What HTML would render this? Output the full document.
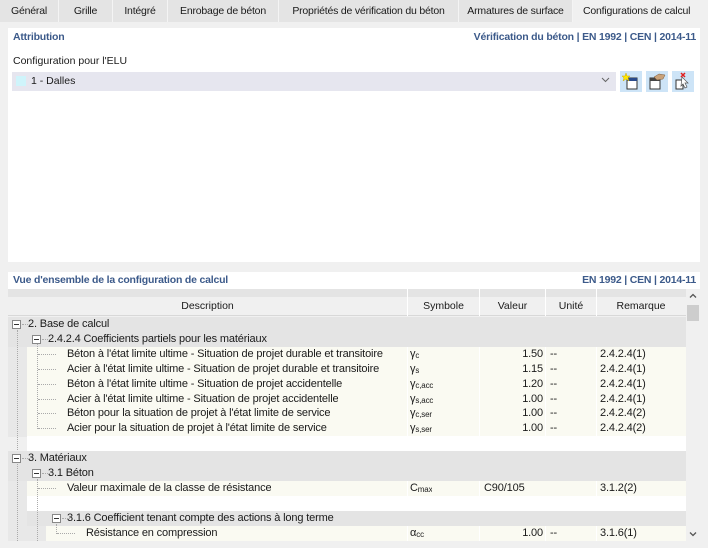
<!DOCTYPE html>
<html><head><meta charset="utf-8"><style>
*{margin:0;padding:0;box-sizing:border-box}
body{width:708px;height:548px;background:#f0f0f0;font-family:"Liberation Sans",sans-serif;font-size:11px;color:#1a1a1a;position:relative;overflow:hidden}
.a{position:absolute;white-space:nowrap}
.tab{position:absolute;top:0;height:22px;line-height:22px;text-align:center;background:#e4e4e4;border-right:1px solid #f4f4f4;font-size:10.5px;letter-spacing:-0.2px;white-space:nowrap}
.blue{color:#3c5a8a;font-weight:bold;font-size:10.5px;letter-spacing:-0.2px}
.row{position:absolute;left:8px;width:678px;height:15px;line-height:15px}
.c{position:absolute;top:0;height:15px;white-space:nowrap;overflow:hidden;font-size:11px;letter-spacing:-0.15px}
.exp{position:absolute;width:9px;height:9px;border:1px solid #888;background:#fff;top:3px}
.exp:after{content:"";position:absolute;left:1px;top:3px;width:5px;height:1px;background:#333}
.vl{position:absolute;border-left:1px dotted #aaa}
.hl{position:absolute;border-top:1px dotted #aaa;width:8px}
.btn{position:absolute;top:71px;width:22px;height:21px;background:#cde4f7}
sub{font-size:8px;vertical-align:-1px}
</style></head><body>
<div class="tab" style="left:0;width:59px">Général</div>
<div class="tab" style="left:59px;width:54px">Grille</div>
<div class="tab" style="left:113px;width:55px">Intégré</div>
<div class="tab" style="left:168px;width:111px">Enrobage de béton</div>
<div class="tab" style="left:279px;width:180px">Propriétés de vérification du béton</div>
<div class="tab" style="left:459px;width:114px">Armatures de surface</div>
<div class="tab" style="left:573px;width:135px;background:#f0f0f0;border:none;text-align:left;padding-left:10px">Configurations de calcul</div>

<div class="a" style="left:8px;top:28px;width:692px;height:234px;background:#fff"></div>
<div class="a blue" style="left:13px;top:31px">Attribution</div>
<div class="a blue" style="right:12px;top:31px">Vérification du béton | EN 1992 | CEN | 2014-11</div>
<div class="a" style="left:13px;top:55px;font-size:10.5px">Configuration pour l'ELU</div>
<div class="a" style="left:12px;top:72px;width:604px;height:19px;background:#e6e6ef"></div>
<div class="a" style="left:16px;top:76px;width:10px;height:10px;background:#cff4fb"></div>
<div class="a" style="left:31px;top:75px;font-size:10.5px">1 - Dalles</div>
<svg class="a" style="left:601px;top:77px" width="9" height="6"><path d="M1 1l3.5 3.5L8 1" stroke="#666" fill="none"/></svg>
<div class="btn" style="left:620px"><svg width="22" height="21"><rect x="7" y="7" width="10" height="11" fill="#fff" stroke="#333"/><rect x="7" y="7" width="10" height="3" fill="#2a4a8a"/><path d="M6 2l1 3 3 0-2 2 1 3-3-2-3 2 1-3-2-2 3 0z" fill="#ffe600" stroke="#c9a800" stroke-width=".5"/></svg></div>
<div class="btn" style="left:646px"><svg width="22" height="21"><rect x="4" y="7" width="10" height="11" fill="#fff" stroke="#333"/><rect x="4" y="7" width="10" height="3" fill="#444"/><path d="M8 6l5-3 6 1-2 4-6 1z" fill="#c9a27a" stroke="#7a5a3a" stroke-width=".5"/></svg></div>
<div class="btn" style="left:672px"><svg width="22" height="21"><rect x="4" y="9" width="7" height="9" fill="#fff" stroke="#333"/><path d="M10 6l6 6-3 0 2 4-2 1-2-4-2 2z" fill="#fff" stroke="#555" stroke-width=".7"/><path d="M9 2l4 4M13 2l-4 4" stroke="#e02020" stroke-width="1.5"/></svg></div>

<div class="a" style="left:8px;top:272px;width:692px;height:17px;background:#fff"></div>
<div class="a blue" style="left:13px;top:274px">Vue d'ensemble de la configuration de calcul</div>
<div class="a blue" style="right:12px;top:274px">EN 1992 | CEN | 2014-11</div>
<div class="a" style="left:8px;top:289px;width:678px;height:8px;background:#e4e4e4"></div>
<div class="a" style="left:8px;top:297px;width:678px;height:19px;background:#f0f0f0;border-bottom:1px solid #d8d8d8"></div>
<div class="a" style="left:407px;top:289px;width:1px;height:27px;background:#fff"></div>
<div class="a" style="left:479px;top:289px;width:1px;height:27px;background:#fff"></div>
<div class="a" style="left:545px;top:289px;width:1px;height:27px;background:#fff"></div>
<div class="a" style="left:596px;top:289px;width:1px;height:27px;background:#fff"></div>
<div class="a" style="left:8px;top:300px;width:399px;text-align:center;font-size:10.5px">Description</div>
<div class="a" style="left:408px;top:300px;width:71px;text-align:center;font-size:10.5px">Symbole</div>
<div class="a" style="left:480px;top:300px;width:65px;text-align:center;font-size:10.5px">Valeur</div>
<div class="a" style="left:546px;top:300px;width:50px;text-align:center;font-size:10.5px">Unité</div>
<div class="a" style="left:597px;top:300px;width:88px;text-align:center;font-size:10.5px">Remarque</div>
<div class="a" style="left:686px;top:289px;width:14px;height:252px;background:#f0f0f0"></div>
<svg class="a" style="left:689px;top:293px" width="8" height="6"><path d="M1 4.5L4 1.5 7 4.5" stroke="#555" fill="none" stroke-width="1.3"/></svg>
<div class="a" style="left:687px;top:305px;width:12px;height:16px;background:#cdcdcd"></div>
<svg class="a" style="left:689px;top:531px" width="8" height="6"><path d="M1 1.5L4 4.5 7 1.5" stroke="#555" fill="none" stroke-width="1.3"/></svg>

<div class="row" style="top:317px;background:#e4e4e4"><div class="exp" style="left:4px"></div><div class="c" style="left:20px">2. Base de calcul</div></div>
<div class="row" style="top:332px;background:#e4e4e4"><div class="exp" style="left:24px"></div><div class="c" style="left:40px">2.4.2.4 Coefficients partiels pour les matériaux</div></div>

<div class="row" style="top:347px;background:#e8e8e8;height:90px"></div>
<div class="a" style="left:27px;top:347px;width:659px;height:89px;background:#fafaf2"></div>
<div class="a" style="left:27px;top:436px;width:659px;height:15px;background:#fff"></div>

<div class="row" style="top:347px"><div class="c" style="left:59px">Béton à l'état limite ultime - Situation de projet durable et transitoire</div><div class="c" style="left:402px">γ<sub>c</sub></div><div class="c" style="left:472px;width:63px;text-align:right">1.50</div><div class="c" style="left:542px">--</div><div class="c" style="left:592px">2.4.2.4(1)</div></div>
<div class="row" style="top:362px"><div class="c" style="left:59px">Acier à l'état limite ultime - Situation de projet durable et transitoire</div><div class="c" style="left:402px">γ<sub>s</sub></div><div class="c" style="left:472px;width:63px;text-align:right">1.15</div><div class="c" style="left:542px">--</div><div class="c" style="left:592px">2.4.2.4(1)</div></div>
<div class="row" style="top:377px"><div class="c" style="left:59px">Béton à l'état limite ultime - Situation de projet accidentelle</div><div class="c" style="left:402px">γ<sub>c,acc</sub></div><div class="c" style="left:472px;width:63px;text-align:right">1.20</div><div class="c" style="left:542px">--</div><div class="c" style="left:592px">2.4.2.4(1)</div></div>
<div class="row" style="top:392px"><div class="c" style="left:59px">Acier à l'état limite ultime - Situation de projet accidentelle</div><div class="c" style="left:402px">γ<sub>s,acc</sub></div><div class="c" style="left:472px;width:63px;text-align:right">1.00</div><div class="c" style="left:542px">--</div><div class="c" style="left:592px">2.4.2.4(1)</div></div>
<div class="row" style="top:406px"><div class="c" style="left:59px">Béton pour la situation de projet à l'état limite de service</div><div class="c" style="left:402px">γ<sub>c,ser</sub></div><div class="c" style="left:472px;width:63px;text-align:right">1.00</div><div class="c" style="left:542px">--</div><div class="c" style="left:592px">2.4.2.4(2)</div></div>
<div class="row" style="top:421px"><div class="c" style="left:59px">Acier pour la situation de projet à l'état limite de service</div><div class="c" style="left:402px">γ<sub>s,ser</sub></div><div class="c" style="left:472px;width:63px;text-align:right">1.00</div><div class="c" style="left:542px">--</div><div class="c" style="left:592px">2.4.2.4(2)</div></div>

<div class="row" style="top:451px;background:#e4e4e4"><div class="exp" style="left:4px"></div><div class="c" style="left:20px">3. Matériaux</div></div>
<div class="row" style="top:466px;background:#e4e4e4"><div class="exp" style="left:24px"></div><div class="c" style="left:40px">3.1 Béton</div></div>
<div class="row" style="top:481px;background:#e8e8e8;height:60px"></div>
<div class="a" style="left:27px;top:481px;width:659px;height:15px;background:#fafaf2"></div>
<div class="a" style="left:27px;top:496px;width:659px;height:15px;background:#fff"></div>
<div class="a" style="left:27px;top:511px;width:659px;height:15px;background:#e4e4e4"></div>
<div class="a" style="left:46px;top:526px;width:640px;height:15px;background:#fafaf2"></div>
<div class="a" style="left:27px;top:526px;width:19px;height:15px;background:#e8e8e8"></div>
<div class="row" style="top:481px"><div class="c" style="left:59px">Valeur maximale de la classe de résistance</div><div class="c" style="left:402px">C<sub>max</sub></div><div class="c" style="left:476px">C90/105</div><div class="c" style="left:592px">3.1.2(2)</div></div>
<div class="row" style="top:511px"><div class="exp" style="left:44px"></div><div class="c" style="left:59px">3.1.6 Coefficient tenant compte des actions à long terme</div></div>
<div class="row" style="top:526px"><div class="c" style="left:78px">Résistance en compression</div><div class="c" style="left:402px">α<sub>cc</sub></div><div class="c" style="left:472px;width:63px;text-align:right">1.00</div><div class="c" style="left:542px">--</div><div class="c" style="left:592px">3.1.6(1)</div></div>

<div class="a" style="left:407px;top:347px;width:1px;height:89px;background:#fff"></div>
<div class="a" style="left:479px;top:347px;width:1px;height:89px;background:#fff"></div>
<div class="a" style="left:545px;top:347px;width:1px;height:89px;background:#fff"></div>
<div class="a" style="left:596px;top:347px;width:1px;height:89px;background:#fff"></div>
<div class="a" style="left:407px;top:481px;width:1px;height:15px;background:#fff"></div>
<div class="a" style="left:479px;top:481px;width:1px;height:15px;background:#fff"></div>
<div class="a" style="left:596px;top:481px;width:1px;height:15px;background:#fff"></div>
<div class="a" style="left:407px;top:526px;width:1px;height:15px;background:#fff"></div>
<div class="a" style="left:479px;top:526px;width:1px;height:15px;background:#fff"></div>
<div class="a" style="left:545px;top:526px;width:1px;height:15px;background:#fff"></div>
<div class="a" style="left:596px;top:526px;width:1px;height:15px;background:#fff"></div>

<div class="vl" style="left:17px;top:330px;height:120px"></div>
<div class="vl" style="left:17px;top:464px;height:77px"></div>
<div class="vl" style="left:37px;top:344px;height:85px"></div>
<div class="vl" style="left:37px;top:479px;height:62px"></div>
<div class="vl" style="left:56px;top:524px;height:10px"></div>
<div class="hl" style="left:22px;top:324px"></div>
<div class="hl" style="left:42px;top:339px"></div>
<div class="hl" style="left:38px;top:354px;width:18px"></div>
<div class="hl" style="left:38px;top:369px;width:18px"></div>
<div class="hl" style="left:38px;top:384px;width:18px"></div>
<div class="hl" style="left:38px;top:399px;width:18px"></div>
<div class="hl" style="left:38px;top:413px;width:18px"></div>
<div class="hl" style="left:38px;top:428px;width:18px"></div>
<div class="hl" style="left:22px;top:458px"></div>
<div class="hl" style="left:42px;top:473px"></div>
<div class="hl" style="left:38px;top:488px;width:18px"></div>
<div class="hl" style="left:62px;top:518px"></div>
<div class="hl" style="left:57px;top:533px;width:18px"></div>
</body></html>
